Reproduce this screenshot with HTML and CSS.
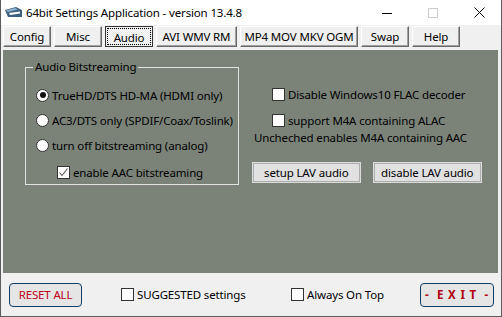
FILE: index.html
```html
<!DOCTYPE html>
<html lang="en">
<head>
    <meta charset="UTF-8">
    <title>64bit Settings Application</title>
    <link rel="stylesheet" href="styles.css">
</head>
<body>
    <div class="window">
        <div class="titlebar">
            <svg class="app-icon" width="18" height="12" viewBox="0 0 18 12">
                <path d="M0 4 L11 1 L17 4 L17 11 L3 11 Z" fill="#3d6080"/>
                <path d="M4 7 L15 5.5 L15 7.5 L5 9 Z" fill="#ffffff"/>
                <path d="M1 4.5 L10 2 L13 3.5 L3 6 Z" fill="#8fb2cc"/>
            </svg>
            <span class="title">64bit Settings Application - version 13.4.8</span>
            <div class="caption">
                <span class="cap"><svg width="10" height="10" viewBox="0 0 10 10"><path d="M0 5.5 H10" stroke="#000" stroke-width="1"/></svg></span>
                <span class="cap"><svg width="10" height="10" viewBox="0 0 10 10"><rect x="0.5" y="0.5" width="9" height="9" fill="none" stroke="#cccccc"/></svg></span>
                <span class="cap"><svg width="11" height="11" viewBox="0 0 11 11"><path d="M0.5 0.5 L10.5 10.5 M10.5 0.5 L0.5 10.5" stroke="#000" stroke-width="1"/></svg></span>
            </div>
        </div>

        <div class="tabs">
            <button class="tab tab-s">Config</button>
            <button class="tab tab-s">Misc</button>
            <button class="tab tab-s active"><span class="focus">Audio</span></button>
            <button class="tab tab-m">AVI WMV RM</button>
            <button class="tab tab-l">MP4 MOV MKV OGM</button>
            <button class="tab tab-s">Swap</button>
            <button class="tab tab-s">Help</button>
        </div>

        <div class="panel">
            <fieldset class="group">
                <legend>Audio Bitstreaming</legend>
                <label class="opt"><span class="radio on"></span>TrueHD/DTS HD-MA (HDMI only)</label>
                <label class="opt"><span class="radio"></span>AC3/DTS only (SPDIF/Coax/Toslink)</label>
                <label class="opt"><span class="radio"></span>turn off bitstreaming (analog)</label>
                <label class="opt sub"><span class="check"><svg width="11" height="11" viewBox="0 0 11 11"><path d="M1.5 5.5 L4 8.5 L9.5 1.5" fill="none" stroke="#555" stroke-width="1.1"/></svg></span>enable AAC bitstreaming</label>
            </fieldset>

            <div class="side">
                <label class="opt indent"><span class="check"></span>Disable Windows10 FLAC decoder</label>
                <label class="opt indent second"><span class="check"></span>support M4A containing ALAC</label>
                <div class="note">Uncheched enables M4A containing AAC</div>
                <div class="side-buttons">
                    <button class="btn btn-setup">setup LAV audio</button>
                    <button class="btn btn-disable">disable LAV audio</button>
                </div>
            </div>
        </div>

        <div class="footer">
            <button class="action reset">RESET ALL</button>
            <label class="opt suggested"><span class="check"></span>SUGGESTED settings</label>
            <label class="opt ontop"><span class="check"></span>Always On Top</label>
            <button class="action exit">-&nbsp; E X I T &nbsp;-</button>
        </div>
    </div>
</body>
</html>
```

FILE: styles.css
```css
body {
    margin: 0;
    background-color: #f0f0f0;
    font-family: "Noto Sans", "Open Sans", sans-serif;
    font-size: 11.5px;
    letter-spacing: -0.15px;
    color: #000;
}
.window {
    width: 502px;
    height: 317px;
    box-sizing: border-box;
    border: 1px solid #5c5c5c;
    border-top: none;
    background-color: #f0f0f0;
    display: flex;
    flex-direction: column;
}
.titlebar {
    height: 25px;
    background-color: #fff;
    display: flex;
    align-items: center;
}
.app-icon {
    margin-left: 4px;
    margin-top: -1px;
}
.title {
    margin-left: 3px;
    margin-top: -1px;
    font-size: 11.5px;
    white-space: nowrap;
}
.caption {
    margin-left: auto;
    margin-right: -1px;
    display: flex;
    height: 25px;
}
.cap {
    width: 46px;
    display: flex;
    align-items: center;
    justify-content: center;
}
.tabs {
    display: flex;
    gap: 3px;
    margin-top: 1px;
    padding-left: 2px;
}
button {
    font-family: inherit;
    font-size: 11.5px;
    letter-spacing: -0.15px;
    color: #000;
    margin: 0;
    padding: 0;
    white-space: nowrap;
}
.tab {
    height: 21px;
    box-sizing: border-box;
    background-color: #f0f0f0;
    border: 1px solid;
    border-color: #fff #696969 #696969 #fff;
    box-shadow: inset -1px -1px 0 #a0a0a0;
}
.tab-s { width: 48px; }
.tab-m { width: 81px; }
.tab-l { width: 118px; }
.tab.active {
    border-color: #333;
    box-shadow: none;
    background: repeating-conic-gradient(#fff 0 25%, #e6e6e6 0 50%) 0 0 / 2px 2px;
    padding: 1px;
}
.focus {
    display: flex;
    height: 100%;
    align-items: center;
    justify-content: center;
    border: 1px dotted #000;
    box-sizing: border-box;
    padding-top: 2px;
}
.panel {
    margin-top: 3px;
    margin-left: 2px;
    width: 495px;
    height: 223px;
    background-color: #7b8379;
    display: flex;
    align-items: flex-start;
}
.group {
    margin: 9px 0 0 22px;
    width: 214px;
    height: 126px;
    box-sizing: border-box;
    border: 1px solid #e2e2e2;
    padding: 12px 0 0 10px;
    min-width: 0;
}
.group legend {
    padding: 0 2px;
    margin-left: -3px;
    line-height: 16px;
}
.opt {
    display: flex;
    align-items: center;
    gap: 3px;
    height: 16px;
    white-space: nowrap;
}
.group .opt + .opt {
    margin-top: 9px;
}
.group .opt.sub {
    margin-top: 11px;
    padding-left: 21px;
}
.radio {
    width: 13px;
    height: 13px;
    box-sizing: border-box;
    border: 1px solid #333;
    border-radius: 50%;
    background-color: #fff;
    display: flex;
    align-items: center;
    justify-content: center;
    flex: none;
}
.radio.on::after {
    content: "";
    width: 6px;
    height: 6px;
    border-radius: 50%;
    background-color: #111;
}
.check {
    width: 13px;
    height: 13px;
    box-sizing: border-box;
    border: 1px solid #333;
    background-color: #fff;
    display: flex;
    align-items: center;
    justify-content: center;
    flex: none;
}
.side {
    margin-left: 13px;
    padding-top: 36px;
    width: 230px;
}
.side .indent {
    padding-left: 20px;
}
.side .second {
    margin-top: 10px;
}
.note {
    margin-top: 2px;
    margin-left: 2px;
    height: 16px;
    line-height: 16px;
    white-space: nowrap;
}
.side-buttons {
    display: flex;
    gap: 12px;
    margin-top: 16px;
}
.btn {
    height: 21px;
    box-sizing: border-box;
    background-color: #e1e1e1;
    border: 1px solid #dcdcdc;
    box-shadow: inset 0 0 0 1px #adadad;
}
.btn-setup { width: 109px; }
.btn-disable { width: 110px; }
.footer {
    flex: 1;
    display: flex;
    align-items: center;
    padding-left: 8px;
}
.action {
    height: 24px;
    box-sizing: border-box;
    background-color: #e5e5e5;
    border: 1px solid #0f3d66;
    border-radius: 4px;
    color: #c0001a;
}
.reset {
    width: 73px;
}
.suggested {
    margin-left: 39px;
    width: 170px;
}
.ontop {
    width: 129px;
}
.exit {
    width: 74px;
    font-weight: bold;
    color: #b00010;
    letter-spacing: 0.8px;
}
```
